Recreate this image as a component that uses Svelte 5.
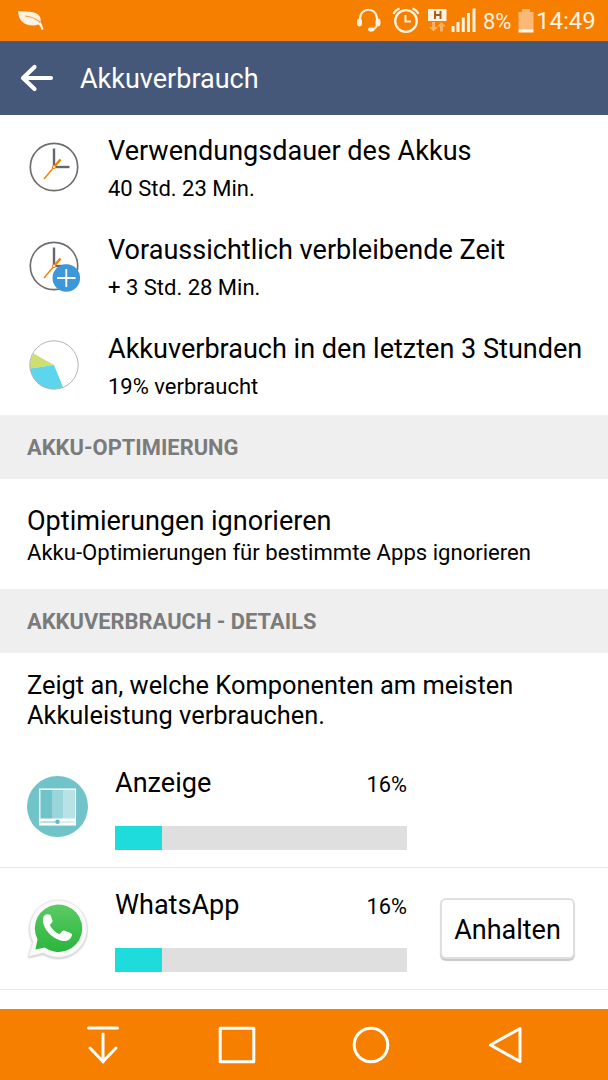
<script lang="ts">
    const summary = [
        { icon: 'clock', title: 'Verwendungsdauer des Akkus', value: '40 Std. 23 Min.' },
        { icon: 'remaining', title: 'Voraussichtlich verbleibende Zeit', value: '+ 3 Std. 28 Min.' },
        { icon: 'pie', title: 'Akkuverbrauch in den letzten 3 Stunden', value: '19% verbraucht' },
    ];

    const apps = [
        { icon: 'display', name: 'Anzeige', percent: 16, stoppable: false },
        { icon: 'whatsapp', name: 'WhatsApp', percent: 16, stoppable: true },
    ];
</script>

<div class="screen">
    <div class="status-bar">
        <svg class="leaf" width="26" height="20" viewBox="0 0 26 20">
            <path d="M0 0C5 1 10 0 16 1.500C21 3 23.500 6.500 22.500 11C24 13 25 16 25.500 18.500L23.500 19C23 16.500 22 14.500 20.500 13.500C15 15.500 8 14.500 4 10.500C1 7.500 .5 4 0 0Z" fill="#fff2e2" />
            <path d="M7 5C12 5.500 18 7.500 22.300 11.500" fill="none" stroke="#f9a04a" stroke-width="1.100" />
        </svg>
        <svg class="status-icons" width="120" height="30" viewBox="0 0 120 30">
            <g fill="none" stroke="#fff2e2" stroke-width="2">
                <path d="M4 16V14C4 1.500 21 1.500 21 14V16M21 20C20 23 18 24.500 15 24.500" />
                <circle cx="50" cy="16" r="10.800" stroke-width="2.300" />
                <path d="M49.500 10V16.500H55" />
                <path d="M37.500 9C38.500 6.500 40.500 4.500 43.500 3.500M56.500 3.500C59.500 4.500 61.500 6.500 62.500 9" />
            </g>
            <g fill="#fff2e2">
                <rect x="1" y="13.500" width="5" height="8" rx="2.400" />
                <rect x="19.500" y="13.500" width="5" height="8" rx="2.400" />
                <rect x="12" y="22.500" width="6.500" height="4" rx="2" />
                <path d="M72 4H90.500V16H72Z" />
                <path d="M95.500 21H98.500V27H95.500ZM100.500 17H103.500V27H100.500ZM105.800 12.500H108.800V27H105.800ZM111 8H114V27H111ZM116.500 3.500H119.500V27H116.500Z" />
            </g>
            <path d="M79 6V14M84.500 6V14M79 10H84.500" stroke="#a85a14" stroke-width="1.900" fill="none" />
            <path d="M76 17H79V22H82L77.500 26.500L73 22H76ZM84 26.500H87V21.500H90L85.500 17L81 21.500H84Z" fill="#fbb069" />
        </svg>
        <span class="battery-text">8%</span>
        <svg class="battery" width="16" height="25" viewBox="0 0 16 25">
            <path d="M4 1H12V4H15.500V22H.5V4H4Z" fill="#fbb878" />
            <rect x=".5" y="21.500" width="15" height="3" fill="#fff8ef" />
        </svg>
        <span class="time">14:49</span>
    </div>

    <header>
        <svg width="34" height="28" viewBox="0 0 34 28">
            <path d="M31 14H3M14.500 3L3 14L14.500 25" fill="none" stroke="#fff" stroke-width="4.200" stroke-linecap="round" stroke-linejoin="round" />
        </svg>
        <h1>Akkuverbrauch</h1>
    </header>

    <main>
        <ul class="summary">
            {#each summary as item}
                <li>
                    <svg width="54" height="54" viewBox="0 0 54 54">
                        {#if item.icon === 'pie'}
                            <path d="M25 25L4.600 13.500A24 24 0 0 0 1.200 28.500Z" fill="#cddf6e" />
                            <path d="M25 25L1.200 28.500A24 24 0 0 0 34 47.300Z" fill="#5dd5ed" />
                            <circle cx="25" cy="25" r="24.200" fill="none" stroke="#aaa" stroke-width=".9" />
                        {:else}
                            <circle cx="25" cy="25" r="23.700" fill="#fff" stroke="#6d6e70" stroke-width="1.700" />
                            <path d="M25 6.500V26.200" stroke="#616671" stroke-width="2.400" />
                            <path d="M24 25H40.500" stroke="#616671" stroke-width="2.400" />
                            <path d="M15 37L25 25" stroke="#f77f00" stroke-width="1.400" />
                            <path d="M25 25L31.500 17.500" stroke="#f77f00" stroke-width="2.500" />
                            <circle cx="25" cy="25" r="1.500" fill="#fff" stroke="#f77f00" />
                            {#if item.icon === 'remaining'}
                                <circle cx="37.300" cy="37" r="13.800" fill="#3c98d9" />
                                <path d="M37.300 28V46M28 37H46.500" stroke="#fff" stroke-width="1.800" />
                            {/if}
                        {/if}
                    </svg>
                    <div>
                        <div class="title">{item.title}</div>
                        <div class="sub">{item.value}</div>
                    </div>
                </li>
            {/each}
        </ul>

        <h2>AKKU-OPTIMIERUNG</h2>
        <div class="option">
            <div class="title">Optimierungen ignorieren</div>
            <div class="sub">Akku-Optimierungen für bestimmte Apps ignorieren</div>
        </div>

        <h2>AKKUVERBRAUCH - DETAILS</h2>
        <p>Zeigt an, welche Komponenten am meisten<br />Akkuleistung verbrauchen.</p>

        {#each apps as app}
            <div class="app">
                {#if app.icon === 'display'}
                    <svg width="62" height="62" viewBox="0 0 62 62">
                        <circle cx="31.500" cy="30.500" r="30.500" fill="#70c3c9" />
                        <rect x="13.700" y="13.200" width="35.600" height="35.600" fill="#70c3c9" stroke="#fff" stroke-width="1.500" />
                        <path d="M26 14H37V43H26Z" fill="#9ad6d9" />
                        <path d="M37 14H48.500V43H37Z" fill="#b8e2e5" />
                        <path d="M13.500 42.500H49.500V49H13.500Z" fill="#fff" />
                        <path d="M14.500 46H31.500" stroke="#70c3c9" />
                        <path d="M31.500 46H48.500" stroke="#b8dfe2" />
                        <circle cx="31.500" cy="45.800" r="2.200" fill="#5fb9c1" />
                    </svg>
                {:else}
                    <svg width="62" height="62" viewBox="1 0 62 62">
                        <defs>
                            <linearGradient id="wa" x2="0" y2="1">
                                <stop offset="0" stop-color="#5bcb64" />
                                <stop offset="1" stop-color="#2ab53c" />
                            </linearGradient>
                        </defs>
                        <g class="bubble">
                            <path d="M3.500 58.500L8 44A28.600 28.600 0 1 1 18.500 55.200Z" fill="#fafafa" stroke="#e2e2e2" stroke-width=".7" stroke-linejoin="round" />
                        </g>
                        <path d="M10.500 51.500L12.500 41.200A23.700 23.700 0 1 1 19.700 49.500Z" fill="url(#wa)" />
                        <path d="M18 20.500C19 16.500 22 15.500 25.500 17L27.500 22.500C28 24.500 25 26 25 27C26.500 31 31 35 34.500 36C36 35.500 37 32 39 32.500C41.500 33.300 45 34.500 47 36C47 40.500 43 43.500 38.500 43C29.500 42 17 32 18 20.500Z" fill="#fff" />
                    </svg>
                {/if}
                <div class="usage">
                    <div class="usage-head">
                        <span class="title">{app.name}</span>
                        <span class="percent">{app.percent}%</span>
                    </div>
                    <div class="bar"><div class="fill" style="width: {app.percent}%"></div></div>
                </div>
                {#if app.stoppable}
                    <button>Anhalten</button>
                {/if}
            </div>
        {/each}
    </main>

    <nav>
        <svg viewBox="0 0 40 40"><path d="M5.500 3H34.500M20 9V37M7 23L20 36.500L33 23" /></svg>
        <svg viewBox="0 0 40 40"><path d="M3.200 3.200H36.800V36.800H3.200Z" /></svg>
        <svg viewBox="0 0 40 40"><circle cx="20" cy="20" r="16.800" /></svg>
        <svg viewBox="0 0 40 40"><path d="M35 3.500V36.500L5.500 20Z" /></svg>
    </nav>
</div>

<style>
    :global(body) {
        margin: 0;
    }
    .screen {
        width: 608px;
        height: 1080px;
        display: flex;
        flex-direction: column;
        overflow: hidden;
        background: #fff;
        color: #000;
        font-family: Roboto, "Liberation Sans", sans-serif;
    }
    .status-bar {
        height: 41px;
        flex: none;
        box-sizing: border-box;
        padding: 0 13px 0 18px;
        display: flex;
        align-items: center;
        background: #f77f00;
        color: #fff2e2;
    }
    .leaf {
        margin-right: auto;
    }
    .status-icons {
        margin-right: 7px;
        margin-top: -1px;
    }
    .battery-text {
        width: 35px;
        margin-top: 1px;
        font-size: 22px;
    }
    .battery {
        margin-top: -1px;
    }
    .time {
        width: 59px;
        margin-left: 2px;
        margin-top: 1px;
        font-size: 24px;
    }
    header {
        height: 74px;
        flex: none;
        display: flex;
        align-items: center;
        padding-left: 20px;
        gap: 26px;
        background: #465879;
        color: #fff;
    }
    h1 {
        margin: 2px 0 0;
        font-size: 27px;
        font-weight: 400;
    }
    main {
        flex: 1;
        min-height: 0;
        overflow: hidden;
    }
    ul {
        list-style: none;
        margin: 0;
        padding: 3px 0 0;
        height: 297px;
    }
    li {
        height: 99px;
        display: flex;
        align-items: center;
        padding-left: 29px;
        gap: 25px;
    }
    li svg {
        margin-top: 2px;
    }
    .title {
        font-size: 27.05px;
        line-height: 36px;
        white-space: nowrap;
    }
    .sub {
        font-size: 22px;
        line-height: 30px;
        white-space: nowrap;
    }
    li .title {
        margin-top: 2px;
    }
    li .sub {
        margin-top: 5px;
    }
    h2 {
        margin: 0;
        height: 64px;
        padding-left: 27px;
        background: #efefef;
        color: #7b7b7b;
        font-size: 21.9px;
        font-weight: 700;
        line-height: 65px;
    }
    .option {
        height: 110px;
        box-sizing: border-box;
        padding: 24px 27px 0;
    }
    .option .sub {
        margin-top: -2px;
        font-size: 22.1px;
    }
    p {
        margin: 0;
        height: 93px;
        box-sizing: border-box;
        padding: 17px 27px 0;
        font-size: 25.4px;
        line-height: 30px;
    }
    .app {
        height: 122px;
        box-sizing: border-box;
        border-bottom: 1px solid #e8e8e8;
        display: flex;
        align-items: center;
        padding-left: 26px;
    }
    .usage {
        width: 292px;
        margin: 2px 33px 0 27px;
    }
    .usage-head {
        display: flex;
        justify-content: space-between;
        align-items: center;
        margin-bottom: 25px;
    }
    .percent {
        padding-top: 3px;
        font-size: 21.8px;
    }
    .bar {
        height: 24px;
        background: #dfdfdf;
    }
    .fill {
        height: 100%;
        background: #1fdcdc;
    }
    .bubble {
        filter: drop-shadow(0 1px 1px rgba(0, 0, 0, 0.25));
    }
    button {
        width: 135px;
        height: 61px;
        padding: 2px 0 0;
        border: 2px solid #dfdfdf;
        border-radius: 6px;
        background: #fff;
        box-shadow: 0 2px 1px #c9c9c9;
        color: #000;
        font-family: inherit;
        font-size: 27px;
    }
    nav {
        height: 71px;
        flex: none;
        display: flex;
        justify-content: center;
        align-items: center;
        gap: 94px;
        background: #f77f00;
    }
    nav svg {
        width: 40px;
        height: 40px;
        fill: none;
        stroke: #fff;
        stroke-width: 3;
        stroke-linecap: round;
        stroke-linejoin: round;
    }
</style>
